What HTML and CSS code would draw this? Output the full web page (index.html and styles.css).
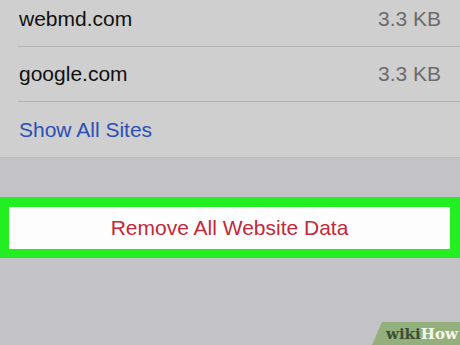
FILE: index.html
```html
<!DOCTYPE html>
<html lang="en">
<head>
  <meta charset="UTF-8">
  <title>Website Data</title>
  <link rel="stylesheet" href="styles.css">
</head>
<body>

<div class="lista-sites">
  <div class="linha-site">
    <span class="nome-site">webmd.com</span>
    <span class="tamanho-site">3.3 KB</span>
  </div>
  <div class="linha-site">
    <span class="nome-site">google.com</span>
    <span class="tamanho-site">3.3 KB</span>
  </div>
  <div class="linha-site ultima">
    <span class="link-azul">Show All Sites</span>
  </div>
</div>

<div class="destaque-verde">
  <div class="botao-remover">Remove All Website Data</div>
</div>

<div class="marca-wiki"><span class="wiki">wiki</span><span class="how">How</span></div>

</body>
</html>
```

FILE: styles.css
```css
body {
  margin: 0;
  padding: 0;
  width: 460px;
  height: 345px;
  overflow: hidden;
  position: relative;
  background-color: #c3c3c7;
  font-family: "Liberation Sans", Arial, sans-serif;
}

.lista-sites {
  margin-top: -8px;
  padding-left: 18px;
  background-color: #cfcfcf;
  border-bottom: 1px solid #bdbdbd;
}

.linha-site {
  display: flex;
  justify-content: space-between;
  align-items: center;
  height: 54px;
  padding-right: 19px;
  border-bottom: 1px solid #b4b4b4;
}

.linha-site.ultima {
  border-bottom: none;
  height: 55px;
}

.nome-site {
  font-size: 21px;
  color: #111;
  padding-left: 1px;
}

.tamanho-site {
  font-size: 21px;
  color: #6b6b6b;
}

.link-azul {
  font-size: 21px;
  color: #2c4fb3;
  padding-left: 1px;
}

.destaque-verde {
  margin-top: 39px;
  background-color: #22ee22;
  padding: 10px 10px 9px 9px;
}

.botao-remover {
  background-color: #fdfdfd;
  height: 42px;
  display: flex;
  align-items: center;
  justify-content: center;
  font-size: 21px;
  color: #c4283a;
}

.marca-wiki {
  position: absolute;
  right: 0;
  bottom: 0;
  width: 74px;
  height: 23px;
  padding-left: 14px;
  background-color: #93b07c;
  clip-path: polygon(10px 0, 100% 0, 100% 100%, 0 100%);
  font-family: "DejaVu Serif", serif;
  font-weight: bold;
  font-size: 15px;
  line-height: 25px;
}

.wiki {
  color: #3f4d38;
}

.how {
  color: #f4f7ef;
}
```
